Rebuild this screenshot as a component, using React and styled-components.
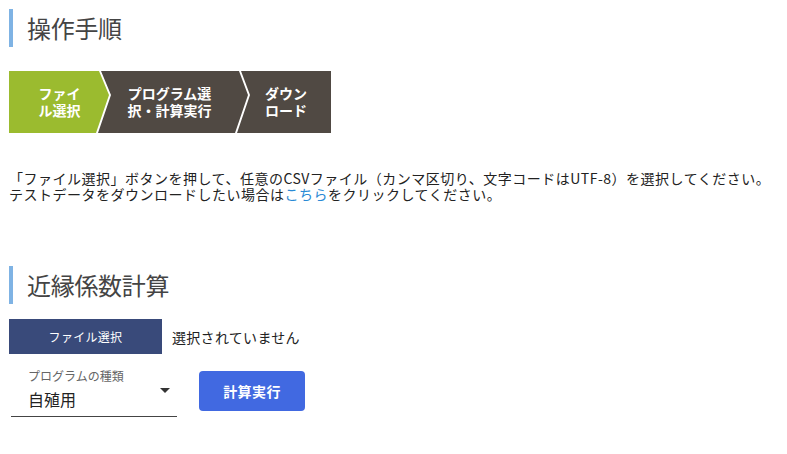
import React from "react";
import styled, { createGlobalStyle } from "styled-components";

const GlobalStyle = createGlobalStyle`
  html, body {
    margin: 0;
    padding: 0;
    background: #ffffff;
  }
  body {
    font-family: "Noto Sans CJK JP", "Noto Sans", sans-serif;
    color: #222222;
  }
`;

const Page = styled.div`
  padding: 9px 9px 0 9px;
  display: flex;
  flex-direction: column;
  align-items: flex-start;
`;

const Heading = styled.h2`
  margin: ${(p) => p.$top || 0}px 0 0 0;
  border-left: 4px solid #7fb3e4;
  padding-left: 14px;
  height: 38px;
  line-height: 38px;
  font-size: 24px;
  font-weight: 400;
  color: #444444;
  letter-spacing: -0.3px;
`;

const StepBar = styled.div`
  margin-top: 24px;
  display: flex;
  height: 62px;
  background: #ffffff;
`;

const Step = styled.div`
  flex: 0 0 ${(p) => p.$width}px;
  margin-left: ${(p) => p.$overlap || 0}px;
  height: 62px;
  background: ${(p) => (p.$active ? "#9bbb2f" : "#504943")};
  clip-path: ${(p) => p.$shape};
  display: flex;
  align-items: center;
  justify-content: center;
  padding: ${(p) => p.$pad || "0"};
  box-sizing: border-box;
  color: #ffffff;
  font-size: 14px;
  font-weight: 700;
  line-height: 17px;
  text-align: center;
`;

const Paragraph = styled.p`
  margin: 37px 0 0 0;
  font-size: 14px;
  line-height: 16px;
  letter-spacing: 0.5px;
  color: #222222;
`;

const Link = styled.a`
  color: #2a8ad5;
  text-decoration: none;
  cursor: pointer;
`;

const FileRow = styled.div`
  margin-top: 15px;
  display: flex;
  align-items: center;
  gap: 10px;
`;

const FileButton = styled.button`
  width: 153px;
  height: 35px;
  border: none;
  border-radius: 0;
  background: #394a7a;
  color: #ffffff;
  font-family: inherit;
  font-size: 12px;
  letter-spacing: 0.3px;
  cursor: pointer;
`;

const FileStatus = styled.span`
  font-size: 14px;
  letter-spacing: 0.3px;
  color: #222222;
`;

const ControlRow = styled.div`
  margin-top: 15px;
  display: flex;
  align-items: flex-start;
  gap: 22px;
`;

const Select = styled.div`
  position: relative;
  margin-left: 2px;
  width: 166px;
  box-sizing: border-box;
  padding: 0 0 7px 17px;
  border-bottom: 1px solid #444444;
  display: flex;
  flex-direction: column;
`;

const SelectLabel = styled.span`
  font-size: 12px;
  line-height: 14px;
  color: #666666;
`;

const SelectValue = styled.span`
  margin-top: 6px;
  font-size: 16px;
  line-height: 20px;
  color: #222222;
`;

const Caret = styled.span`
  position: absolute;
  right: 7px;
  top: 19px;
  width: 0;
  height: 0;
  border-left: 5px solid transparent;
  border-right: 5px solid transparent;
  border-top: 5px solid #333333;
`;

const RunButton = styled.button`
  margin-top: 2px;
  width: 106px;
  height: 40px;
  border: none;
  border-radius: 4px;
  background: #4169e1;
  color: #ffffff;
  font-family: inherit;
  font-size: 14px;
  font-weight: 700;
  letter-spacing: 0.4px;
  cursor: pointer;
`;

export default function App() {
  return (
    <>
      <GlobalStyle />
      <Page>
        <Heading>操作手順</Heading>
        <StepBar>
          <Step
            $active
            $width={101}
            $shape="polygon(0 0, 90px 0, 100px 24px, 87px 62px, 0 62px)"
          >
            ファイ
            <br />
            ル選択
          </Step>
          <Step
            $width={151}
            $overlap={-12}
            $pad="0 8px 0 0"
            $shape="polygon(3px 0, 141px 0, 150px 24px, 137px 62px, 0 62px, 13px 24px)"
          >
            プログラム選
            <br />
            択・計算実行
          </Step>
          <Step
            $width={94}
            $overlap={-12}
            $pad="0 0 0 4px"
            $shape="polygon(4px 0, 94px 0, 94px 62px, 0 62px, 13px 24px)"
          >
            ダウン
            <br />
            ロード
          </Step>
        </StepBar>
        <Paragraph>
          「ファイル選択」ボタンを押して、任意のCSVファイル（カンマ区切り、文字コードはUTF-8）を選択してください。
          <br />
          テストデータをダウンロードしたい場合は<Link>こちら</Link>をクリックしてください。
        </Paragraph>
        <Heading $top={64}>近縁係数計算</Heading>
        <FileRow>
          <FileButton>ファイル選択</FileButton>
          <FileStatus>選択されていません</FileStatus>
        </FileRow>
        <ControlRow>
          <Select>
            <SelectLabel>プログラムの種類</SelectLabel>
            <SelectValue>自殖用</SelectValue>
            <Caret />
          </Select>
          <RunButton>計算実行</RunButton>
        </ControlRow>
      </Page>
    </>
  );
}
